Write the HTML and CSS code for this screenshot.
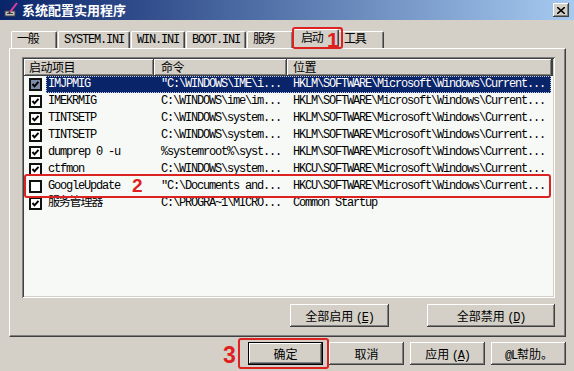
FILE: index.html
```html
<!DOCTYPE html>
<html lang="zh-CN">
<head>
  <meta charset="UTF-8" />
  <title>系统配置实用程序</title>
  <link rel="stylesheet" href="styles.css">
</head>
<body>
  <div class="window">
    <div class="titlebar">
      <svg class="app-icon" viewBox="0 0 16 16" width="16" height="16">
        <rect x="1" y="9" width="10" height="5" fill="#c0c0c0" stroke="#404040" stroke-width="1"/>
        <rect x="3" y="11" width="6" height="1" fill="#404040"/>
        <line x1="6" y1="10" x2="13" y2="1" stroke="#e040a0" stroke-width="2"/>
        <line x1="5" y1="11" x2="6" y2="10" stroke="#202020" stroke-width="2"/>
      </svg>
      <span class="title">系统配置实用程序</span>
      <button class="close">
        <svg viewBox="0 0 8 7" width="8" height="7">
          <path d="M0 0 L8 7 M8 0 L0 7" stroke="#000" stroke-width="1.6"/>
        </svg>
      </button>
    </div>

    <div class="content">
      <div class="tabs">
        <div class="tab">一般</div>
        <div class="tab">SYSTEM.INI</div>
        <div class="tab">WIN.INI</div>
        <div class="tab">BOOT.INI</div>
        <div class="tab">服务</div>
        <div class="tab active">启动</div>
        <div class="tab">工具</div>
      </div>

      <div class="panel">
        <div class="listbox">
          <div class="list-header">
            <div class="hcell col-name">启动项目</div>
            <div class="hcell col-cmd">命令</div>
            <div class="hcell col-loc">位置</div>
            <div class="hcell col-fill"></div>
          </div>

          <div class="row selected">
            <span class="check-cell"><span class="checkbox on"></span></span>
            <span class="cells">
              <span class="cell name">IMJPMIG</span>
              <span class="cell cmd">"C:\WINDOWS\IME\i...</span>
              <span class="cell loc">HKLM\SOFTWARE\Microsoft\Windows\Current...</span>
            </span>
          </div>
          <div class="row">
            <span class="check-cell"><span class="checkbox on"></span></span>
            <span class="cells">
              <span class="cell name">IMEKRMIG</span>
              <span class="cell cmd">C:\WINDOWS\ime\im...</span>
              <span class="cell loc">HKLM\SOFTWARE\Microsoft\Windows\Current...</span>
            </span>
          </div>
          <div class="row">
            <span class="check-cell"><span class="checkbox on"></span></span>
            <span class="cells">
              <span class="cell name">TINTSETP</span>
              <span class="cell cmd">C:\WINDOWS\system...</span>
              <span class="cell loc">HKLM\SOFTWARE\Microsoft\Windows\Current...</span>
            </span>
          </div>
          <div class="row">
            <span class="check-cell"><span class="checkbox on"></span></span>
            <span class="cells">
              <span class="cell name">TINTSETP</span>
              <span class="cell cmd">C:\WINDOWS\system...</span>
              <span class="cell loc">HKLM\SOFTWARE\Microsoft\Windows\Current...</span>
            </span>
          </div>
          <div class="row">
            <span class="check-cell"><span class="checkbox on"></span></span>
            <span class="cells">
              <span class="cell name">dumprep 0 -u</span>
              <span class="cell cmd">%systemroot%\syst...</span>
              <span class="cell loc">HKLM\SOFTWARE\Microsoft\Windows\Current...</span>
            </span>
          </div>
          <div class="row">
            <span class="check-cell"><span class="checkbox on"></span></span>
            <span class="cells">
              <span class="cell name">ctfmon</span>
              <span class="cell cmd">C:\WINDOWS\system...</span>
              <span class="cell loc">HKCU\SOFTWARE\Microsoft\Windows\Current...</span>
            </span>
          </div>
          <div class="row">
            <span class="check-cell"><span class="checkbox"></span></span>
            <span class="cells">
              <span class="cell name">GoogleUpdate</span>
              <span class="cell cmd">"C:\Documents and...</span>
              <span class="cell loc">HKCU\SOFTWARE\Microsoft\Windows\Current...</span>
            </span>
          </div>
          <div class="row">
            <span class="check-cell"><span class="checkbox on"></span></span>
            <span class="cells">
              <span class="cell name">服务管理器</span>
              <span class="cell cmd">C:\PROGRA~1\MICRO...</span>
              <span class="cell loc">Common Startup</span>
            </span>
          </div>
        </div>

        <div class="panel-buttons">
          <button class="btn btn-enable">全部启用 <span class="key">(<u>E</u>)</span></button>
          <button class="btn btn-disable">全部禁用 <span class="key">(<u>D</u>)</span></button>
        </div>
      </div>

      <div class="dialog-buttons">
        <button class="btn btn-default">确定</button>
        <button class="btn">取消</button>
        <button class="btn">应用 <span class="key">(<u>A</u>)</span></button>
        <button class="btn"><span class="key">@L</span>幇肋<span class="key">。</span></button>
      </div>
    </div>

    <!-- 红色标注 -->
    <div class="mark mark-tab"></div>
    <div class="mark-num num1">1</div>
    <div class="mark mark-row"></div>
    <div class="mark-num num2">2</div>
    <div class="mark mark-ok"></div>
    <div class="mark-num num3">3</div>
  </div>
</body>
</html>
```

FILE: styles.css
```css
* {
  margin: 0;
  padding: 0;
  box-sizing: border-box;
}
body {
  background-color: #d4d0c8;
  font-family: "Noto Sans CJK SC", sans-serif;
  font-size: 12px;
  color: #000;
}
.window {
  position: relative;
  width: 574px;
  height: 371px;
  background-color: #d4d0c8;
  overflow: hidden;
}
.titlebar {
  height: 20px;
  display: flex;
  align-items: center;
  padding-left: 4px;
  background: linear-gradient(to right, #0a246a, #a6caf0);
}
.app-icon {
  flex: none;
}
.title {
  margin-left: 2px;
  color: #fff;
  font-weight: bold;
  font-size: 13px;
  line-height: 20px;
}
.close {
  margin-left: auto;
  margin-right: 5px;
  width: 16px;
  height: 14px;
  display: flex;
  align-items: center;
  justify-content: center;
  border: none;
  background-color: #d4d0c8;
  box-shadow: inset -1px -1px #404040, inset 1px 1px #fff, inset -2px -2px #808080;
}
.content {
  padding: 10px 8px 0 9px;
}

/* tabs */
.tabs {
  display: flex;
  align-items: flex-end;
  height: 18px;
  padding-left: 2px;
  font-family: "Liberation Mono", "Noto Sans CJK SC", monospace;
  letter-spacing: -1.2px;
}
.tab {
  height: 17px;
  min-width: 46px;
  padding: 0 5px;
  line-height: 16px;
  border-top: 1px solid #fff;
  border-left: 1px solid #fff;
  border-right: 1px solid #404040;
  border-radius: 2px 2px 0 0;
  box-shadow: inset -1px 0 #808080;
  margin-right: 1px;
}
.tab.active {
  position: relative;
  z-index: 1;
  height: 20px;
  margin: 0 -1px -1px -1px;
  padding: 0 7px;
  line-height: 18px;
  background-color: #d4d0c8;
}

/* panel */
.panel {
  height: 289px;
  padding: 8px 0 0 12px;
  border-top: 1px solid #fff;
  border-left: 1px solid #fff;
  border-right: 1px solid #404040;
  border-bottom: 1px solid #404040;
  box-shadow: inset -1px -1px #808080;
}
.listbox {
  width: 533px;
  height: 241px;
  padding: 2px;
  background-color: #f7f9f6;
  box-shadow: inset 1px 1px #808080, inset -1px -1px #fff, inset 2px 2px #404040, inset -2px -2px #d4d0c8;
  font-family: "Liberation Mono", "Noto Sans CJK SC", monospace;
  letter-spacing: -1.2px;
}
.list-header {
  display: flex;
  height: 17px;
}
.hcell {
  height: 17px;
  line-height: 16px;
  background-color: #d4d0c8;
  box-shadow: inset -1px -1px #404040, inset 1px 1px #fff, inset -2px -2px #808080;
  font-family: "Noto Sans CJK SC", sans-serif;
  letter-spacing: -0.5px;
}
.col-name {
  width: 130px;
  padding-left: 5px;
}
.col-cmd {
  width: 133px;
  padding-left: 7px;
}
.col-loc {
  width: 265px;
  padding-left: 6px;
}
.col-fill {
  flex: 1;
}
.row {
  display: flex;
  height: 17px;
  line-height: 17px;
  white-space: nowrap;
}
.check-cell {
  width: 22px;
  padding-left: 5px;
  display: flex;
  align-items: center;
}
.checkbox {
  width: 13px;
  height: 13px;
  border: 2px solid #111;
  background-color: #fff;
}
.checkbox.on {
  background: #fff url("data:image/svg+xml;utf8,<svg xmlns='http://www.w3.org/2000/svg' viewBox='0 0 9 9'><path d='M1.5 4 L3.5 6.3 L7.5 1.8' fill='none' stroke='black' stroke-width='2'/></svg>") center / 9px 9px no-repeat;
}
.row.selected .checkbox.on {
  background-color: #7e8aa8;
}
.cells {
  display: flex;
  width: 505px;
}
.cell {
  overflow: hidden;
}
.cell.name {
  width: 108px;
  padding-left: 2px;
}
.cell.cmd {
  width: 133px;
  padding-left: 7px;
}
.cell.loc {
  flex: 1;
  padding-left: 6px;
}
.row.selected .cells {
  background-color: #0a246a;
  color: #fff;
  outline: 1px dotted #c0c8e0;
  outline-offset: -1px;
}

/* buttons */
.btn {
  height: 23px;
  border: none;
  background-color: #d4d0c8;
  box-shadow: inset -1px -1px #404040, inset 1px 1px #fff, inset -2px -2px #808080;
  font-family: "Noto Sans CJK SC", sans-serif;
  font-size: 12px;
  color: #000;
}
.btn .key {
  font-family: "Liberation Mono", monospace;
  letter-spacing: -1.2px;
}
.panel-buttons {
  display: flex;
  justify-content: flex-end;
  gap: 38px;
  width: 533px;
  margin-top: 6px;
}
.btn-enable {
  width: 99px;
}
.btn-disable {
  width: 128px;
}
.dialog-buttons {
  display: flex;
  justify-content: flex-end;
  gap: 6px;
  margin-top: 5px;
}
.dialog-buttons .btn {
  width: 75px;
}
.dialog-buttons .btn-default {
  box-shadow: inset 0 0 0 1px #000, inset -2px -2px #404040, inset 2px 2px #fff, inset -3px -3px #808080;
}

/* red annotations */
.mark {
  position: absolute;
  z-index: 5;
  border: 2px solid #dd2222;
  border-radius: 3px;
}
.mark-tab {
  left: 292px;
  top: 27px;
  width: 51px;
  height: 22px;
}
.mark-row {
  left: 24px;
  top: 174px;
  width: 527px;
  height: 24px;
}
.mark-ok {
  left: 238px;
  top: 338px;
  width: 91px;
  height: 31px;
}
.mark-num {
  position: absolute;
  z-index: 5;
  color: #e02020;
  font-family: "Liberation Sans", sans-serif;
  font-weight: bold;
  line-height: 1;
}
.num1 {
  left: 327px;
  top: 29px;
  font-size: 21px;
}
.num2 {
  left: 132px;
  top: 176px;
  font-size: 19px;
}
.num3 {
  left: 223px;
  top: 344px;
  font-size: 23px;
}
```
